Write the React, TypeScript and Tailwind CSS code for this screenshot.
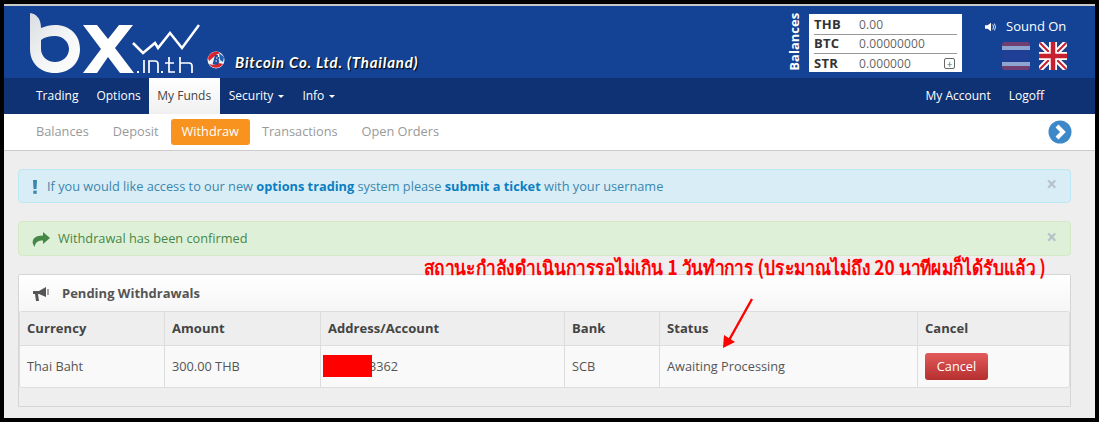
import React from "react";

const sans = "font-['Open_Sans',sans-serif]";

function Logo() {
  return (
    <svg width="176" height="66" viewBox="26 10 176 66" className="shrink-0">
      <defs>
        <linearGradient id="bg" x1="0" y1="0" x2="1" y2="1">
          <stop offset="0" stopColor="#d9dde1" />
          <stop offset="0.55" stopColor="#f4f5f6" />
          <stop offset="1" stopColor="#ffffff" />
        </linearGradient>
      </defs>
      <path
        d="M30 13 C36 14 41 18 41 28 C46 26 50 25 55 25 C70 25 80 35 80 49 C80 63 70 73 55 73 C40 73 30 63 30 49 Z M41 40 L41 49 C41 56 47 62 55 62 C63 62 69 56 69 49 C69 42 63 36 55 36 C49 36 45 37 41 40 Z"
        fill="url(#bg)"
        fillRule="evenodd"
      />
      <path d="M83 25 L97 25 L108 39 L119 25 L133 25 L115 48 L134 73 L120 73 L108 57 L97 73 L83 73 L101 49 Z" fill="#fff" />
      <path d="M133 43 L143 53 L155 43 L158 48 L170 33 L182 48 L199 25" fill="none" stroke="#fff" strokeWidth="2.5" />
      <g fill="none" stroke="#fff" strokeWidth="1.7">
        <path d="M144 60 V73 M149 73 V61 H155 C157 61 158 62 158 64 V73" />
        <path d="M169 57 V72 H175 M165 63 H174" />
        <path d="M180 57 V73 M180 63 H189 C191 63 192 64 192 66 V73" />
      </g>
      <rect x="137" y="71" width="2" height="2" fill="#fff" />
      <rect x="161" y="71" width="2" height="2" fill="#fff" />
    </svg>
  );
}

function BLogo() {
  return (
    <svg width="18" height="18" viewBox="0 0 18 18" className="shrink-0">
      <circle cx="9" cy="9" r="8.5" fill="#f3f3f3" />
      <path d="M1 7 A8 8 0 0 1 13 2 L9 4 L2 10 Z" fill="#d9232e" />
      <path d="M2 13 A8.5 8.5 0 0 0 16 13 L12 12 L6 14 Z" fill="#d9232e" />
      <path d="M12 2 L17 6 L16 11 L13 9 Z" fill="#1f5fb4" />
      <path d="M8 4 H11 L10.8 6 H12.5 L11.5 9 L12.5 10 L11 13.5 H5.5 Z" fill="#1a4f9c" />
      <path d="M9 7 H10.5 M8.5 10 H10" stroke="#fff" strokeWidth="1.2" />
    </svg>
  );
}

function Thai() {
  return (
    <div className="flex h-7 w-7 flex-col overflow-hidden rounded-[3px]">
      <div className="h-1 bg-[#6f3f72]" />
      <div className="h-1 bg-[#8ea6cf]" />
      <div className="h-3 bg-[#1f3f96]" />
      <div className="h-1 bg-[#8ea6cf]" />
      <div className="h-1 bg-[#6f3f72]" />
    </div>
  );
}

function UK() {
  return (
    <svg width="28" height="28" viewBox="0 0 28 28" className="rounded-[3px]">
      <rect width="28" height="28" fill="#1f3f8c" />
      <path d="M0 0 L28 28 M28 0 L0 28" stroke="#fff" strokeWidth="6" />
      <path d="M0 0 L28 28 M28 0 L0 28" stroke="#c8202f" strokeWidth="2" />
      <path d="M14 0 V28 M0 14 H28" stroke="#fff" strokeWidth="8" />
      <path d="M14 0 V28 M0 14 H28" stroke="#c8202f" strokeWidth="4.5" />
    </svg>
  );
}

function Caret() {
  return <span className="ml-[5px] inline-block h-0 w-0 border-x-[3px] border-t-[3px] border-x-transparent border-t-white align-middle" />;
}

function BalRow({ c, v, last, plus }: { c: string; v: string; last?: boolean; plus?: boolean }) {
  return (
    <div className={`flex h-[19px] items-center ${last ? "" : "border-b border-[#999]"}`}>
      <span className="w-[45px] text-[13px] font-bold tracking-[0.3px] text-[#333]">{c}</span>
      <span className="flex-1 text-[12px] tracking-[0.1px] text-[#666]">{v}</span>
      {plus && (
        <span className="mr-[2px] flex h-[11px] w-[11px] items-center justify-center rounded-[2px] border border-[#666] text-[10px] leading-none text-[#666]">+</span>
      )}
    </div>
  );
}

function Cell({ w, children, head, last }: { w: string; children: React.ReactNode; head?: boolean; last?: boolean }) {
  return (
    <div className={`${w} flex items-center px-[7px] ${last ? "" : "border-r border-[#ddd]"} ${head ? "pt-[1px] text-[13px] font-bold tracking-[0.05px] text-[#444]" : "text-[12.75px] text-[#555]"}`}>
      {children}
    </div>
  );
}

export default function App() {
  return (
    <div className={`${sans} relative h-[422px] w-[1099px] overflow-hidden bg-black p-1`}>
      <div className="flex h-[414px] flex-col overflow-hidden bg-[#eeeeee]">
        <div className="h-[2px] bg-[#c9c9c9]" />
        <header className="flex h-[72px] items-start bg-[#144294]">
          <div className="ml-[22px] mt-[4px]"><Logo /></div>
          <div className="ml-[5px] mt-[45px]"><BLogo /></div>
          <div className="ml-[10px] mt-[45px] whitespace-nowrap font-['Lato',sans-serif] text-[15px] font-bold italic tracking-[0.8px] text-white [text-shadow:1px_1px_1px_#000]">
            Bitcoin Co. Ltd. (Thailand)
          </div>
          <div className="ml-auto mt-[7px] flex h-[58px] w-[15px] items-center justify-center">
            <span className="-rotate-90 text-[13px] font-bold text-white">Balances</span>
          </div>
          <div className="ml-[7px] mt-[8px] h-[58px] w-[153px] bg-white px-[5px] pt-[2px]">
            <BalRow c="THB" v="0.00" />
            <BalRow c="BTC" v="0.00000000" />
            <BalRow c="STR" v="0.000000" last plus />
          </div>
          <div className="ml-[23px] mr-[28px] mt-[11px] flex w-[82px] flex-col">
            <div className="flex h-[20px] items-center gap-[9px] whitespace-nowrap text-[13px] text-white">
              <svg width="12" height="12" viewBox="0 0 14 12" fill="#fff" className="shrink-0">
                <path d="M0 4 H3 L7 1 V11 L3 8 H0 Z" />
                <path d="M9 3 Q11 6 9 9 M11 2 Q13.5 6 11 10" fill="none" stroke="#fff" strokeWidth="1" />
              </svg>
              Sound On
            </div>
            <div className="mt-[5px] flex gap-[9px] pl-[17px]">
              <Thai />
              <UK />
            </div>
          </div>
        </header>
        <nav className="flex h-[36px] items-stretch bg-[#0e3274] pl-[21px] text-[12px] text-white">
          <a className="flex items-center px-[11px]">Trading</a>
          <a className="flex items-center pl-[7px] pr-[8px]">Options</a>
          <a className="flex w-[71px] items-center justify-center bg-gradient-to-b from-white to-[#f0f0f0] text-[#444]">My Funds</a>
          <a className="flex items-center pl-[9px] pr-[9px]">Security<Caret /></a>
          <a className="flex items-center pl-[9px]">Info<Caret /></a>
          <a className="ml-auto flex items-center">My Account</a>
          <a className="ml-[18px] mr-[51px] flex items-center">Logoff</a>
        </nav>
        <div className="flex h-[37px] items-center border-b border-[#ccc] bg-white pl-[14px] text-[12.75px] text-[#999]">
          <a className="pl-[18px] pr-[24px]">Balances</a>
          <a className="pr-[12px]">Deposit</a>
          <a className="flex h-[26px] items-center rounded-[3px] bg-[#f7931e] px-[11px] text-white">Withdraw</a>
          <a className="pl-[12px] pr-[24px]">Transactions</a>
          <a>Open Orders</a>
          <svg width="24" height="24" viewBox="0 0 24 24" className="ml-auto mr-[23px]">
            <circle cx="12" cy="12" r="11.5" fill="#3d88c9" />
            <path d="M9 6 L15 12 L9 18" fill="none" stroke="#fff" strokeWidth="4" />
          </svg>
        </div>
        <main className="flex flex-1 flex-col pl-[14px] pr-[24px] pt-[18px]">
          <div className="relative flex h-[34px] items-center rounded-[4px] border border-[#bce8f1] bg-[#d9edf7] pl-[14px] pt-[1px] text-[12.75px] text-[#3a87ad]">
            <svg width="14" height="14" viewBox="0 0 14 14" fill="#3a87ad" className="shrink-0">
              <path d="M0 0 H4 L3.5 9 H0.5 Z" />
              <rect x="0.3" y="10.6" width="3.4" height="3.2" />
            </svg>
            <span>If you would like access to our new <b className="text-[#0a7ec2]">options trading</b> system please <b className="text-[#0a7ec2]">submit a ticket</b> with your username</span>
            <span className="absolute right-[13px] top-[1px] text-[19px] font-bold leading-[26px] text-[#b5c2c8]">×</span>
          </div>
          <div className="relative mt-[18px] flex h-[35px] items-center rounded-[4px] border border-[#d6e9c6] bg-[#dff0d8] pl-[13px] pt-[1px] text-[12.75px] text-[#468847]">
            <svg width="18" height="15" viewBox="0 0 18 15" className="mr-[8px]" fill="#468847">
              <path d="M11 0 L18 6 L11 12 V8.5 C6 8.5 3.5 10 2.5 15 C0.5 12 0 9.5 1.5 7 C3.5 4.3 7 3.6 11 3.6 Z" />
            </svg>
            <span>Withdrawal has been confirmed</span>
            <span className="absolute right-[13px] top-[2px] text-[19px] font-bold leading-[26px] text-[#b5c2c8]">×</span>
          </div>
          <section className="relative mt-[18px] flex h-[133px] flex-col rounded-t-[2px] border border-[#d5d5d5] bg-[#eeeeee]">
            <div className="flex h-[36px] items-center bg-gradient-to-b from-white to-[#f6f6f6] pl-[14px] pt-[1px] text-[13px] font-bold text-[#555]">
              <svg width="18" height="16" viewBox="0 0 18 16" fill="#555" className="mr-[11px]">
                <path d="M0 5 H6 L13 1 V11 L6 8 H5 L6 15 H3 L2 8 H0 Z" />
                <path d="M15 3 V9" stroke="#555" strokeWidth="1" />
              </svg>
              Pending Withdrawals
            </div>
            <div className="rounded-[3px] border border-[#ddd] bg-[#f9f9f9]">
              <div className="flex h-[34px] border-b border-[#ddd] bg-[#eeeeee]">
                <Cell head w="w-[145px]">Currency</Cell>
                <Cell head w="w-[156px]">Amount</Cell>
                <Cell head w="w-[244px]">Address/Account</Cell>
                <Cell head w="w-[95px]">Bank</Cell>
                <Cell head w="w-[258px]">Status</Cell>
                <Cell head last w="flex-1">Cancel</Cell>
              </div>
              <div className="flex h-[41px]">
                <Cell w="w-[145px]">Thai Baht</Cell>
                <Cell w="w-[156px]">300.00 THB</Cell>
                <Cell w="w-[244px]"><span className="pl-[41px]">3362</span></Cell>
                <Cell w="w-[95px]">SCB</Cell>
                <Cell w="w-[258px]">Awaiting Processing</Cell>
                <Cell last w="flex-1">
                  <span className="flex h-[27px] w-[63px] items-center justify-center rounded-[3px] bg-gradient-to-b from-[#e35a5a] to-[#b52f2f] text-white">Cancel</span>
                </Cell>
              </div>
            </div>
            <div className="absolute left-[304px] top-[80px] h-[22px] w-[49px] bg-[#ff0000]" />
          </section>
        </main>
      </div>
      <div className="absolute left-[424px] top-[252px] origin-left scale-x-[0.865] whitespace-nowrap font-['Noto_Sans_CJK_SC','Noto_Sans',sans-serif] text-[20px] font-bold leading-[30px] text-[#ff0000]">
        สถานะกำลังดำเนินการรอไม่เกิน 1 วันทำการ (ประมาณไม่ถึง 20 นาทีผมก็ได้รับแล้ว )
      </div>
      <svg width="36" height="52" viewBox="0 0 36 52" className="absolute left-[720px] top-[298px]">
        <path d="M32 1 L8 44" stroke="#f00" strokeWidth="2.4" fill="none" />
        <path d="M3 50 L4 37 L15 44 Z" fill="#f00" />
      </svg>
    </div>
  );
}
